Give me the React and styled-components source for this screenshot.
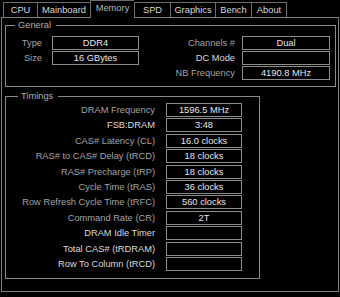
import React from "react";
import styled, { createGlobalStyle } from "styled-components";

const GlobalStyle = createGlobalStyle`
    html, body {
        margin: 0;
        padding: 0;
        background: #000;
    }
    body {
        font-family: "Liberation Sans", Arial, sans-serif;
        font-size: 9.3px;
        color: #e6e6e6;
    }
`;

const Window = styled.div`
    width: 340px;
    height: 297px;
    background: #000;
    overflow: hidden;
`;

const TabBar = styled.div`
    display: flex;
    align-items: flex-end;
    height: 17px;
    padding-left: 3px;
`;

const Tab = styled.div`
    box-sizing: border-box;
    width: ${p => p.$w}px;
    height: ${p => (p.$active ? 18 : 15)}px;
    margin-bottom: ${p => (p.$active ? -1 : 0)}px;
    border: 1px solid #6c6c6c;
    border-bottom: none;
    border-right: ${p => (p.$last ? "1px solid #6c6c6c" : "none")};
    background: #000;
    color: ${p => (p.$active ? "#b8b8b8" : "#d8d8d8")};
    display: flex;
    align-items: center;
    justify-content: center;
    padding-bottom: ${p => (p.$active ? 3 : 0)}px;
    position: relative;
    z-index: ${p => (p.$active ? 1 : 0)};
`;

const Panel = styled.div`
    box-sizing: border-box;
    margin-left: 1px;
    width: 338px;
    height: 275px;
    border: 1px solid #7c7c7c;
    padding: 1px 2px 0 3px;
`;

const Group = styled.fieldset`
    box-sizing: border-box;
    margin: ${p => p.$top}px 0 0 0;
    width: ${p => p.$w}px;
    min-width: 0;
    border: 1px solid #8a8a8a;
    padding: ${p => p.$pad};
`;

const Legend = styled.legend`
    margin-left: ${p => p.$indent}px;
    padding: 0 5px 0 3px;
    line-height: 12px;
    color: #b0b0b0;
`;

const GeneralGrid = styled.div`
    display: grid;
    grid-template-columns: 46px 87px 1fr 88px;
    grid-auto-rows: 14px;
    row-gap: 1px;
`;

const TimingsGrid = styled.div`
    display: grid;
    grid-template-columns: 160px 76px;
    grid-auto-rows: 14px;
    row-gap: 1.4px;
`;

const Label = styled.div`
    text-align: right;
    padding-right: ${p => p.$gap}px;
    line-height: 14px;
    white-space: nowrap;
    color: ${p => (p.$dim ? "#a4a4a4" : "#dcdcdc")};
`;

const Value = styled.div`
    box-sizing: border-box;
    border: 1px solid #8c8c8c;
    text-align: center;
    line-height: 12px;
    color: #e8e8e8;
    white-space: nowrap;
`;

const tabs = [
    { name: "CPU", w: 34 },
    { name: "Mainboard", w: 53 },
    { name: "Memory", w: 44, active: true },
    { name: "SPD", w: 36 },
    { name: "Graphics", w: 45 },
    { name: "Bench", w: 36 },
    { name: "About", w: 36 },
];

const timings = [
    { label: "DRAM Frequency", value: "1596.5 MHz", dim: true },
    { label: "FSB:DRAM", value: "3:48" },
    { label: "CAS# Latency (CL)", value: "16.0 clocks", dim: true },
    { label: "RAS# to CAS# Delay (tRCD)", value: "18 clocks", dim: true },
    { label: "RAS# Precharge (tRP)", value: "18 clocks", dim: true },
    { label: "Cycle Time (tRAS)", value: "36 clocks", dim: true },
    { label: "Row Refresh Cycle Time (tRFC)", value: "560 clocks", dim: true },
    { label: "Command Rate (CR)", value: "2T", dim: true },
    { label: "DRAM Idle Timer", value: "" },
    { label: "Total CAS# (tRDRAM)", value: "" },
    { label: "Row To Column (tRCD)", value: "" },
];

export default function App() {
    return (
        <Window>
            <GlobalStyle />
            <TabBar>
                {tabs.map((t, i) => (
                    <Tab
                        key={t.name}
                        $w={t.w}
                        $active={t.active}
                        $last={i === tabs.length - 1}
                    >
                        {t.name}
                    </Tab>
                ))}
            </TabBar>
            <Panel>
                <Group $top={0} $w={331} $pad="5px 5px 6px 0">
                    <Legend $indent={9}>General</Legend>
                    <GeneralGrid>
                        <Label $dim $gap={10}>Type</Label>
                        <Value>DDR4</Value>
                        <Label $dim $gap={7}>Channels #</Label>
                        <Value>Dual</Value>

                        <Label $dim $gap={10}>Size</Label>
                        <Value>16 GBytes</Value>
                        <Label $gap={7}>DC Mode</Label>
                        <Value></Value>

                        <Label />
                        <div />
                        <Label $dim $gap={7}>NB Frequency</Label>
                        <Value>4190.8 MHz</Value>
                    </GeneralGrid>
                </Group>
                <Group $top={3} $w={255} $pad="1px 17px 7px 0">
                    <Legend $indent={12}>Timings</Legend>
                    <TimingsGrid>
                        {timings.map(t => (
                            <React.Fragment key={t.label}>
                                <Label $dim={t.dim} $gap={11}>{t.label}</Label>
                                <Value>{t.value}</Value>
                            </React.Fragment>
                        ))}
                    </TimingsGrid>
                </Group>
            </Panel>
        </Window>
    );
}
